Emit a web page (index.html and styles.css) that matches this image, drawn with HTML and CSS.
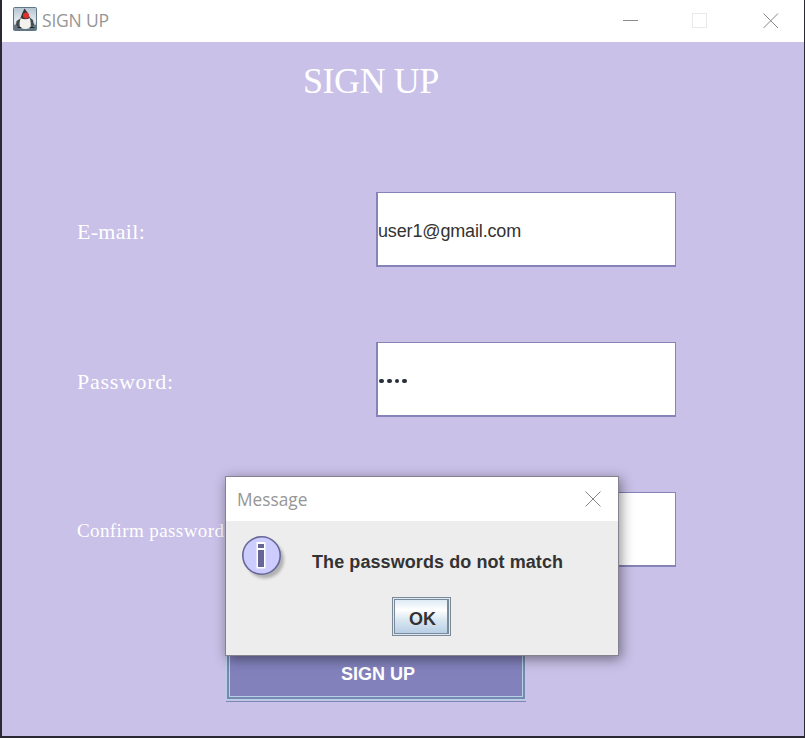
FILE: index.html
```html
<!DOCTYPE html>
<html lang="en">
<head>
<meta charset="utf-8">
<title>SIGN UP</title>
<link rel="stylesheet" href="styles.css">
</head>
<body>
<div class="window">
  <header class="titlebar">
    <svg class="app-icon" viewBox="0 0 24 24">
      <defs><linearGradient id="sky" x1="0" y1="0" x2="0" y2="1"><stop offset="0" stop-color="#b4c4d2"/><stop offset=".6" stop-color="#e6ebef"/><stop offset="1" stop-color="#8195a5"/></linearGradient></defs>
      <rect x=".5" y=".5" width="23" height="23" rx="1" fill="url(#sky)" stroke="#5f7688"/>
      <path d="M1 18Q12 14 23 18V23H1Z" fill="#667681"/>
      <path d="M8 11L3.500 14L3 18L5 20L9 17ZM16 10L20 13L21 18L19 19L15 16Z" fill="#444b4f"/>
      <path d="M8 10Q5 19 8 21Q12 23 17 21Q19 17 16 9Z" fill="#f3f2ed"/>
      <path d="M11.500 1.500Q9 6 7.500 11Q12 13.500 17 11Q15 5 11.500 1.500Z" fill="#34373a"/>
      <circle cx="13" cy="8.500" r="3" fill="#e0302b"/>
      <path d="M4 21Q6 18 9 21ZM16 21Q19 18 22 21Z" fill="#202426"/>
    </svg>
    <span class="window-title">SIGN UP</span>
    <svg class="controls" viewBox="0 0 156 16" fill="none">
      <path d="M0 7.500H15" stroke="#8c8c8c"/>
      <rect x="69.500" y=".5" width="14" height="14" stroke="#e9e9e9"/>
      <path d="M140.500 .5L155 15M155 .5L140.500 15" stroke="#858585"/>
    </svg>
  </header>
  <main class="form">
    <h1 class="heading">SIGN UP</h1>
    <div class="row"><label class="label email">E-mail:</label><div class="field">user1@gmail.com</div></div>
    <div class="row"><label class="label">Password:</label><div class="field"><span class="dots"><i></i><i></i><i></i><i></i></span></div></div>
    <div class="row"><label class="label confirm">Confirm password:</label><div class="field"></div></div>
    <div class="submit"><div class="submit-face">SIGN UP</div></div>
  </main>
</div>
<section class="dialog">
  <header class="dialog-bar">
    <span class="dialog-title">Message</span>
    <svg class="dialog-close" viewBox="0 0 16 16"><path d="M.5 .5L15.500 15.500M15.500 .5L.5 15.500" stroke="#858585"/></svg>
  </header>
  <div class="dialog-body">
    <div class="message">
      <svg class="info" viewBox="0 0 46 46">
        <defs><filter id="soft" x="-20%" y="-20%" width="150%" height="150%"><feGaussianBlur stdDeviation="1.500"/></filter></defs>
        <circle cx="23" cy="23.500" r="19" fill="#999" opacity=".7" filter="url(#soft)"/>
        <circle cx="19.500" cy="19.500" r="18.700" fill="#ccccff" stroke="#666699" stroke-width="1.600"/>
        <path d="M14.500 6H23.500V32.500H14.500Z" fill="#fff"/>
        <path d="M16 8H22V12H16ZM16 14H22V31H16Z" fill="#666699"/>
      </svg>
      <p class="message-text">The passwords do not match</p>
    </div>
    <div class="ok"><div class="ok-face">OK</div></div>
  </div>
</section>
</body>
</html>
```
FILE: styles.css
```css
* { box-sizing: border-box; }
body { margin: 0; width: 805px; height: 738px; overflow: hidden; background: #2a2832; font-family: "Liberation Sans", Arial, sans-serif; }
.window { width: 802px; height: 736px; margin-left: 2px; background: #c9c1e8; }
.titlebar { display: flex; align-items: center; height: 42px; padding: 0 25px 4px 11px; background: #fff; }
.app-icon { width: 24px; height: 24px; }
.window-title { margin-left: 5px; font: 17.500px/24px "Open Sans", "Noto Sans", sans-serif; color: #969696; letter-spacing: -.2px; padding-top: 2px; }
.controls { width: 156px; height: 16px; margin-left: auto; margin-top: 3px; }
.form { padding: 18px 0 0 75px; }
.heading { margin: 0 0 90px 226px; height: 42px; font: 36px/43px "Liberation Serif", serif; color: #fff; letter-spacing: -.45px; }
.row { display: flex; align-items: center; height: 75px; margin-bottom: 75px; }
.label { width: 299px; font: 22px/26px "Liberation Serif", serif; color: #fff; letter-spacing: .7px; padding-top: 4px; }
.email { letter-spacing: .3px; }
.confirm { font-size: 19px; letter-spacing: .4px; padding-top: 3px; }
.field { display: flex; align-items: center; width: 300px; height: 75px; padding-top: 5px; background: #fff; border: solid #8583b7; border-width: 1px 1px 2px 2px; font-size: 18px; letter-spacing: -.15px; color: #333; }
.dots { display: flex; gap: 3px; padding-left: 1px; margin-top: -1px; }
.dots i { width: 4.800px; height: 4.800px; border-radius: 50%; background: #28303a; }
.submit { width: 300px; height: 60px; padding: 0 1px 2px; margin-left: 149px; border-bottom: 1px solid #7788b5; }
.submit-face { display: flex; align-items: center; justify-content: center; height: 57px; border: 2px solid #718aad; box-shadow: inset 0 0 0 1px #b8cfe5, 0 0 0 1px #b8cfe5; background: #8281bc; color: #fff; font-size: 18px; font-weight: bold; padding: 7px 0 0 4px; }
.dialog { position: absolute; left: 225px; top: 476px; width: 394px; height: 180px; border: 1px solid #85818f; background: #ededed; box-shadow: 2px 3px 12px rgba(0, 0, 0, .45); }
.dialog-bar { display: flex; align-items: center; justify-content: space-between; height: 44px; padding: 0 17px 0 11px; background: #fff; }
.dialog-title { font: 17.300px/24px "Open Sans", "Noto Sans", sans-serif; color: #969696; padding-top: 1px; }
.dialog-close { width: 16px; height: 16px; }
.dialog-body { padding: 15px 16px; }
.message { display: flex; height: 46px; }
.info { width: 46px; height: 46px; }
.message-text { margin: 16px 0 0 24px; font-size: 18px; line-height: 21px; letter-spacing: .08px; font-weight: bold; color: #333; white-space: nowrap; }
.ok { width: 59px; height: 39px; margin: 15px 0 0 150px; border: 1px solid #7a8a99; padding: 1px; background: #dce8f2; }
.ok-face { display: flex; align-items: center; justify-content: center; height: 35px; border: 2px solid #7a8a99; border-width: 1px 2px 1px 1px; background: linear-gradient(#dfebf5, #fff 30%, #dae7f2 60%, #b8cfe5); font-size: 18px; font-weight: bold; color: #333; padding: 5px 0 0 3px; }
```
